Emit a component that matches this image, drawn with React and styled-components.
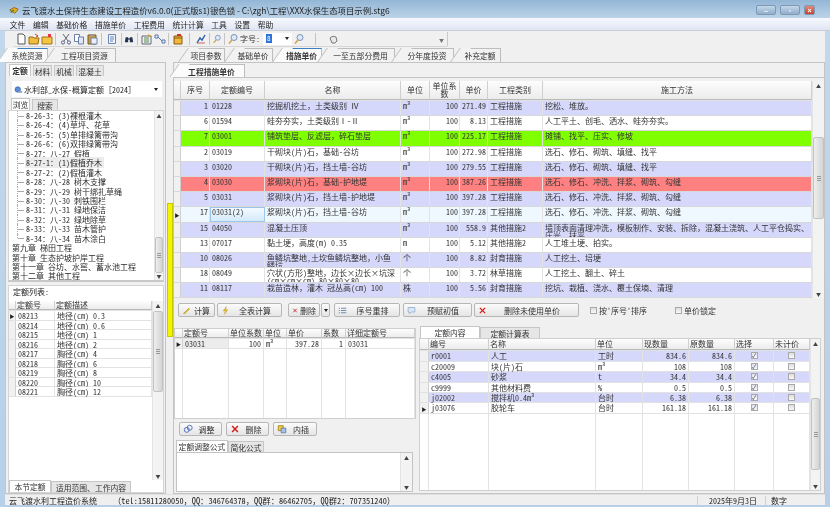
import React from 'react'
import styled, { createGlobalStyle } from 'styled-components'

const GlobalStyle = createGlobalStyle`
  html, body { margin: 0; padding: 0; background: #c3d8ec; }
  * { box-sizing: border-box; }
`

const FONT = `"Noto Sans Mono CJK SC", "Noto Sans CJK SC", sans-serif`

const Window = styled.div`
  width: 830px;
  height: 507px;
  display: flex;
  flex-direction: column;
  overflow: hidden;
  font-family: ${FONT};
  font-size: 8px;
  line-height: 9px;
  color: #333;
  background: linear-gradient(#c3d8ec, #b7d0e8);
  filter: blur(0.3px);
`
const TitleBar = styled.div`
  height: 18px;
  flex: none;
  display: flex;
  align-items: center;
  padding: 2px 15px 0 9px;
  gap: 3px;
  background: linear-gradient(#93b6d6, #bcd3e8);
`
const TitleText = styled.div`
  font-family: "Noto Sans CJK SC", sans-serif;
  font-size: 8.4px;
  color: #222;
  flex: 1;
  white-space: nowrap;
`
const WinButton = styled.div`
  width: ${p => p.$w}px;
  height: 10px;
  margin-left: 1px;
  border: 1px solid #7d99b5;
  border-radius: 2px;
  display: flex;
  align-items: center;
  justify-content: center;
  color: #fff;
  font: bold 7px "Liberation Sans", sans-serif;
  background: ${p => p.$close ? 'linear-gradient(#e08a7a, #c8402c)' : 'linear-gradient(#c5d7e9, #92aecb)'};
`
const MenuBar = styled.div`
  height: 13px;
  flex: none;
  display: flex;
  align-items: center;
  padding: 0 0 0 6px;
  background: linear-gradient(#f7f9fd, #dfe5f3);
  border-bottom: 1px solid #c9ced8;
`
const MenuItem = styled.div`
  padding: 0 3.8px;
  font-size: 7.8px;
  color: #222;
  white-space: nowrap;
`
const ToolBar = styled.div`
  height: 16px;
  flex: none;
  display: flex;
  align-items: center;
  padding: 0 0 0 9px;
  margin: 0 5px;
  background: #f0f0f0;
`
const ToolGroup = styled.div`
  display: flex;
  align-items: center;
  position: relative;
  width: 434px;
  height: 15px;
  border-right: 1px solid #c9c9c9;
  border-bottom: 1px solid #d5d5d5;
  border-radius: 0 0 2px 0;
`
const ToolIcon = styled.div`
  width: ${p => p.$w || 13}px;
  display: flex;
  justify-content: center;
  flex: none;
`
const ToolSep = styled.div`
  width: 1px;
  height: 12px;
  background: #c4c4c4;
  flex: none;
  margin: 0 ${p => p.$m ?? 2}px;
`
const ToolChevron = styled.div`
  position: absolute;
  right: 3px;
  top: 3px;
  font-size: 5px;
  color: #777;
`
const FontLabel = styled.div`
  font-size: 8px;
  white-space: nowrap;
  margin: 0 3px 0 1px;
`
const SizeSelect = styled.div`
  width: 29px;
  height: 12px;
  background: #fff;
  display: flex;
  align-items: center;
  justify-content: space-between;
  padding: 0 3px 0 3px;
  font-size: 5px;
`
const SizeValue = styled.span`
  background: #2f73d9;
  color: #fff;
  padding: 0 1px;
  font-size: 7px;
`
const Body = styled.div`
  flex: 1;
  min-height: 0;
  display: flex;
  margin: 0 5px;
  background: #f0f0f0;
`
const LeftPanel = styled.div`
  width: 161px;
  flex: none;
  display: flex;
  flex-direction: column;
  padding-top: 1px;
`
const Splitter = styled.div`
  width: 7px;
  flex: none;
  padding: 156px 0 0 1px;
`
const SplitterBar = styled.div`
  width: 6px;
  height: 134px;
  background: #f4f400;
  border: 1px solid #c8c800;
`
const RightPanel = styled.div`
  flex: 1;
  min-width: 0;
  display: flex;
  flex-direction: column;
  padding-top: 1px;
`
const TabRow = styled.div`
  display: flex;
  align-items: flex-end;
  height: ${p => p.$h || 14}px;
  flex: none;
  padding-left: ${p => p.$pad || 0}px;
  border-bottom: ${p => p.$line ? '1px solid #c4c4c4' : 'none'};
`
const SlantTab = styled.div`
  position: relative;
  width: ${p => p.$w}px;
  height: ${p => p.$h || 14}px;
  margin-left: ${p => p.$ml || 0}px;
  display: flex;
  align-items: center;
  justify-content: center;
  font-size: 7.8px;
  white-space: nowrap;
  color: #333;
  font-weight: ${p => p.$bold ? 700 : 400};
  background: ${p => p.$active ? '#fbfbfb' : '#f2f2f2'};
  border-top: 1px solid ${p => p.$blue ? '#3e7fc0' : '#bdbdbd'};
  border-right: 1px solid #bdbdbd;
  &::before {
    content: '';
    position: absolute;
    left: -5px;
    top: -1px;
    bottom: 0;
    width: 10px;
    background: inherit;
    border-left: 1px solid #bdbdbd;
    transform: skewX(-35deg);
  }
  & > span { position: relative; }
`
const Pane = styled.div`
  flex: ${p => p.$grow ? 1 : 'none'};
  min-height: 0;
  display: flex;
  flex-direction: column;
  border: 1px solid #c4c4c4;
  background: #f0f0f0;
`
const BoxTabRow = styled.div`
  display: flex;
  align-items: flex-end;
  height: ${p => p.$h || 13}px;
  flex: none;
  padding-left: ${p => p.$pad || 0}px;
  gap: ${p => p.$gap || 0}px;
`
const BoxTab = styled.div`
  width: ${p => p.$w}px;
  height: ${p => p.$active ? 12 : 11}px;
  display: flex;
  align-items: center;
  justify-content: center;
  font-size: 7.8px;
  white-space: nowrap;
  font-weight: ${p => p.$bold ? 700 : 400};
  background: ${p => p.$active ? '#fff' : '#e6e6e6'};
  border: 1px solid #c6c6c6;
  border-bottom: none;
`
const SelectBox = styled.div`
  height: 16px;
  margin: 5px 3px 2px 6px;
  flex: none;
  background: #fff;
  display: flex;
  align-items: center;
  padding: 0 4px 0 2px;
  gap: 1px;
  color: #222;
`
const Caret = styled.span`
  margin-left: ${p => p.$center ? 0 : 'auto'};
  width: 0;
  height: 0;
  border-left: 2.5px solid transparent;
  border-right: 2.5px solid transparent;
  border-top: 3px solid #222;
`
const Tree = styled.div`
  height: 172px;
  flex: none;
  display: flex;
  margin: 0 1px 0 2px;
  background: #fff;
  border: 1px solid #d4d4d4;
  border-bottom: 2px solid #c8c8c8;
`
const TreeRows = styled.div`
  flex: 1;
  min-width: 0;
`
const TreeRow = styled.div`
  height: 9.45px;
  line-height: 9.45px;
  white-space: nowrap;
  position: relative;
  padding-left: ${p => p.$top ? 3 : 17}px;
  color: #2b2b2b;
  &::before {
    content: ${p => p.$top ? 'none' : '""'};
    position: absolute;
    left: 8px;
    top: 0;
    bottom: ${p => p.$last ? '4.7px' : 0};
    width: 6px;
    border-left: 1px dotted #aaa;
    background: linear-gradient(#aaa, #aaa) no-repeat 0 4.7px / 100% 1px;
  }
`
const TreeSel = styled.span`
  background: #ececec;
  padding: 0 2px 0 1px;
  margin-left: -1px;
`
const VScroll = styled.div`
  width: ${p => p.$w || 10}px;
  flex: none;
  display: flex;
  flex-direction: column;
  background: #f3f3f3;
  border-left: 1px solid #e4e4e4;
`
const ScrollEnd = styled.div`
  height: 9px;
  flex: none;
  color: #444;
  font-size: 5px;
  line-height: 9px;
  text-align: center;
`
const ScrollTrack = styled.div`
  flex: 1;
  min-height: 0;
  padding-top: ${p => p.$top || 0}px;
`
const ScrollThumb = styled.div`
  height: ${p => p.$h}px;
  background: linear-gradient(90deg, #eee, #d4d4d4);
  border: 1px solid #c2c2c2;
  border-radius: 2px;
  display: flex;
  align-items: center;
  justify-content: center;
  &::after {
    content: '';
    width: 4px;
    height: 5px;
    background: repeating-linear-gradient(#999 0 1px, transparent 1px 2px);
  }
`
const ListPane = styled.div`
  flex: 1;
  min-height: 0;
  display: flex;
  flex-direction: column;
  margin: 3px 1px 0 2px;
  background: #fff;
  border: 1px solid #d4d4d4;
`
const ListLabel = styled.div`
  height: 15px;
  padding: 1px 0 0 4px;
  flex: none;
  color: #222;
`
const TableWrap = styled.div`
  flex: ${p => p.$fixed ? 'none' : 1};
  min-height: 0;
  display: flex;
  background: #fff;
  border: ${p => p.$border ? '1px solid #cfcfcf' : 'none'};
  margin: ${p => p.$m || 0};
`
const TableBody = styled.div`
  flex: 1;
  min-width: 0;
  display: flex;
  flex-direction: column;
`
const Row = styled.div`
  display: grid;
  flex: ${p => p.$fill ? 1 : 'none'};
  grid-template-columns: ${p => p.$cols};
  height: ${p => p.$fill ? 'auto' : `${p.$h}px`};
  background: ${p => p.$bg || '#fff'};
  border-bottom: ${p => p.$fill ? 'none' : `1px solid ${p.$line || '#e2e2e2'}`};
`
const Cell = styled.div`
  overflow: ${p => p.$clip ? 'hidden' : 'visible'};
  white-space: ${p => p.$clip && !p.$right ? 'normal' : 'nowrap'};
  padding: ${p => p.$clip ? (p.$right ? '1px 1px 0 0' : '1px 2px 0') : '0 2px'};
  text-align: ${p => p.$right ? 'right' : 'left'};
  line-height: ${p => p.$clip ? 8 : 9}px;
  border-right: 1px solid #e3e3e3;
  background: ${p => p.$sel ? 'linear-gradient(#f4fbff, #d2e9fb)' : p.$shade ? '#ececec' : 'transparent'};
  outline: ${p => p.$sel ? '1px solid #9cc6ea' : 'none'};
  outline-offset: -1px;
  word-break: break-all;
`
const Head = styled.div`
  display: flex;
  align-items: center;
  justify-content: ${p => p.$left ? 'flex-start' : 'center'};
  text-align: center;
  line-height: 8px;
  background: linear-gradient(#fdfdfd, #ececec);
  border-right: 1px solid #cfcfcf;
  border-bottom: 1px solid #b9b9b9;
  color: #333;
  padding: ${p => p.$left ? '0 0 0 1px' : '0 2px'};
  white-space: ${p => p.$left ? 'nowrap' : 'normal'};
`
const Indicator = styled.div`
  background: #f1f1f1;
  border-right: 1px solid #d0d0d0;
  display: flex;
  align-items: center;
  justify-content: center;
  color: #222;
  font-size: 5px;
  line-height: 1;
`
const ButtonBar = styled.div`
  height: 22px;
  flex: none;
  display: flex;
  align-items: center;
  padding: 2px 0 0 4px;
  gap: 2px;
`
const ActionButton = styled.div`
  width: ${p => p.$w}px;
  height: 14px;
  flex: none;
  margin-left: ${p => p.$ml || 0}px;
  display: flex;
  align-items: center;
  justify-content: center;
  padding: ${p => p.$bare ? 0 : '0 3px'};
  gap: 2px;
  background: linear-gradient(#fbfbfb, #e5e5e5);
  border: 1px solid #b7b7b7;
  border-radius: 2px;
  white-space: nowrap;
  color: #333;
`
const ButtonText = styled.span`
  flex: 1;
  text-align: center;
`
const Check = styled.div`
  width: 7px;
  height: 7px;
  flex: none;
  background: ${p => p.$on ? 'linear-gradient(#e2e2ee, #fafafa)' : 'linear-gradient(#dedede, #f8f8f8)'};
  border: 1px solid #a9a9a9;
  color: #234;
  font-size: 6px;
  line-height: 5px;
  text-align: center;
  margin: ${p => p.$inline ? 0 : '1px auto 0'};
`
const CheckLabel = styled.div`
  display: flex;
  align-items: center;
  gap: 2px;
  margin-left: ${p => p.$ml}px;
  white-space: nowrap;
`
const Lower = styled.div`
  flex: 1;
  min-height: 0;
  display: flex;
  gap: 3px;
`
const LowerLeft = styled.div`
  width: 242px;
  flex: none;
  display: flex;
  flex-direction: column;
  padding-top: 8px;
`
const LowerRight = styled.div`
  flex: 1;
  min-width: 0;
  display: flex;
  flex-direction: column;
  padding: 6px 3px 2px 0;
`
const SmallButtons = styled.div`
  display: flex;
  height: 19px;
  flex: none;
  gap: 4px;
  padding: 3px 0 0 5px;
`
const Formula = styled.div`
  height: 40px;
  flex: none;
  margin: 0 3px 1px 2px;
  display: flex;
  background: #fff;
  border: 1px solid #c4c4c4;
`
const FormulaText = styled.div`
  flex: 1;
`
const StatusBar = styled.div`
  height: 11px;
  flex: none;
  margin: 0 5px 2px;
  display: flex;
  align-items: center;
  background: #efefef;
  padding-left: 4px;
  color: #222;
  border-top: 1px solid #e0e0e0;
`
const StatusMain = styled.div`
  width: 104px;
  flex: none;
  white-space: nowrap;
`
const StatusInfo = styled.div`
  flex: 1;
  font-size: 8.3px;
  white-space: nowrap;
`
const StatusCell = styled.div`
  width: ${p => p.$w}px;
  flex: none;
  padding-left: ${p => p.$pad}px;
  border-left: 1px solid #d0d0d0;
  white-space: nowrap;
`

const paths = {
  new: <><path d="M3 1h5l2 2v8H3z" fill="#fff" stroke="#555" /></>,
  open: <><path d="M1 4h4l1 1h5l-1 6H1z" fill="#f1bd3c" stroke="#9a6d10" /><path d="M7 1l3 2-2 1" fill="none" stroke="#c33" /></>,
  star: <><path d="M1 4h10v7H1z" fill="#f4c542" stroke="#a5741a" /><path d="M7 1h3v3H7z" fill="#e34" /></>,
  cut: <><path d="M3 1l5 7M9 1L4 8" stroke="#667" fill="none" /><circle cx="3" cy="9.5" r="1.6" fill="none" stroke="#568" /><circle cx="9" cy="9.5" r="1.6" fill="none" stroke="#568" /></>,
  copy: <><path d="M1.5 1.5h5v7h-5z" fill="#fff" stroke="#6a7fa8" /><path d="M5.5 4h5v7h-5z" fill="#dfe8f8" stroke="#6a7fa8" /></>,
  paste: <><path d="M2 2h8v9H2z" fill="#c69a4a" stroke="#7a5a1c" /><path d="M5 5h6v6H5z" fill="#eef" stroke="#68a" /><path d="M4 1h4v2H4z" fill="#999" /></>,
  doc: <><path d="M2.5 1.5h7v9h-7z" fill="#eef3fc" stroke="#6a86b8" /><path d="M4 4h4M4 6h4M4 8h3" stroke="#6a86b8" /></>,
  find: <><path d="M2 4h3v6H1zM7 4h3l1 6H7z" fill="#24324f" /><path d="M5 5h2v2H5z" fill="#24324f" /></>,
  calc: <><path d="M1 3h9v8H1z" fill="#f2f2f2" stroke="#667" /><path d="M3 5h5M3 7h5M3 9h5" stroke="#5a8a5a" /><path d="M7 1l4 2-3 1z" fill="#e0a020" /></>,
  link: <><path d="M1 2h3v3H1zM8 7h3v3H8z" fill="#eef" stroke="#57a" /><path d="M4 4l4 4" stroke="#57a" /></>,
  box: <><path d="M2 3h8v8H2z" fill="#f0b73a" stroke="#8a5d10" /><path d="M2 5h8" stroke="#8a5d10" /><path d="M5 1h4v2H5z" fill="#c33" /></>,
  chart: <><path d="M2 10L5 5l2 2 3-5" stroke="#2a5fb0" fill="none" strokeWidth="1.4" /><path d="M2 10h8" stroke="#c66" /></>,
  zoom: <><circle cx="7" cy="4.5" r="3" fill="#dceaf8" stroke="#7b93b5" /><path d="M5 7l-3 3.5" stroke="#d8a038" strokeWidth="1.4" /></>,
  hand: <><path d="M3 5c2-2 4-2 6-1l1 4-2 2H5z" fill="#e8e8e8" stroke="#777" /></>,
  pencil: <><path d="M2 10l7-7 1 1-6 6z" fill="#f1d23c" stroke="#b79a1c" /></>,
  bolt: <><path d="M7 1L3 6.5h3L4.5 11 9 5H6z" fill="#f1c21c" stroke="#b5901c" strokeWidth=".6" /></>,
  cross: <><path d="M2.5 2.5l7 7M9.5 2.5l-7 7" stroke="#d3201a" strokeWidth="1.8" /></>,
  list: <><path d="M1 3h1.5M1 6h1.5M1 9h1.5M4 3h7M4 6h7M4 9h7" stroke="#4a6a98" /></>,
  note: <><path d="M1.5 2h9v6H6l-3 2V8H1.5z" fill="#d8e8f8" stroke="#8aa8c8" /></>,
  adjust: <><circle cx="4.5" cy="7" r="3" fill="none" stroke="#3a62b8" /><circle cx="8" cy="4.5" r="3" fill="none" stroke="#3a62b8" /></>,
  insert: <><path d="M1.5 2h6v6h-6z" fill="#f3cb45" stroke="#a08020" /><path d="M5 5h5.5v5.5H5z" fill="#a8c4ec" stroke="#5578a8" /></>,
  globe: <><circle cx="5" cy="6" r="3.6" fill="#5b8fd8" stroke="#3a62a8" /><path d="M6 8h5v2.5H6z" fill="#9aa8c0" /></>,
  logo: <><path d="M1 6l5-3 5 2-4 5z" fill="#e8b020" stroke="#8a5d10" /><path d="M2 9l4-3" stroke="#4a7a20" strokeWidth="1.4" /></>,
}

const Icon = ({ name, size = 12 }) => (
  <svg width={size} height={size} viewBox="0 0 12 12">{paths[name]}</svg>
)

const menus = ['文件', '编辑', '基础价格', '措施单价', '工程费用', '统计计算', '工具', '设置', '帮助']

const treeRows = [
  '8-26-3：(3)裸根灌木', '8-26-4：(4)草坪、花草', '8-26-5：(5)单排绿篱带沟', '8-26-6：(6)双排绿篱带沟',
  '8-27：八-27 假植', '8-27-1：(1)假植乔木', '8-27-2：(2)假植灌木', '8-28：八-28 树木支撑',
  '8-29：八-29 树干绑扎草绳', '8-30：八-30 刺铁围栏', '8-31：八-31 绿地保洁', '8-32：八-32 绿地除草',
  '8-33：八-33 苗木管护', '8-34：八-34 苗木涂白',
]
const treeChapters = ['第九章 梯田工程', '第十章 生态护坡护岸工程', '第十一章 谷坊、水窖、蓄水池工程', '第十二章 其他工程']

const normList = [
  ['08213', '地径(cm) 0.3'], ['08214', '地径(cm) 0.6'], ['08215', '地径(cm) 1'], ['08216', '地径(cm) 2'],
  ['08217', '胸径(cm) 4'], ['08218', '胸径(cm) 6'], ['08219', '胸径(cm) 8'], ['08220', '胸径(cm) 10'], ['08221', '胸径(cm) 12'],
]

const LILAC = '#d6d8fb'
const mainCols = '7px 29px 55px 136px 29px 30px 28px 55px 1fr'
const mainHeads = ['', '序号', '定额编号', '名称', '单位', '单位系数', '单价', '工程类别', '施工方法']
const mainRows = [
  [1, '01228', '挖掘机挖土，土类级别 Ⅳ', 'm³', '100', '271.49', '工程措施', '挖松、堆放。', LILAC],
  [6, '01594', '蛙夯夯实，土类级别Ⅰ-Ⅱ', 'm³', '100', '8.13', '工程措施', '人工平土、创毛、洒水、蛙夯夯实。', '#fff'],
  [7, '03001', '铺筑垫层、反滤层，碎石垫层', 'm³', '100', '225.17', '工程措施', '摊铺、找平、压实、修坡', '#80ff00'],
  [2, '03019', '干砌块(片)石，基础-谷坊', 'm³', '100', '272.98', '工程措施', '选石、修石、砌筑、填缝、找平', '#fff'],
  [3, '03020', '干砌块(片)石，挡土墙-谷坊', 'm³', '100', '279.55', '工程措施', '选石、修石、砌筑、填缝、找平', LILAC],
  [4, '03030', '浆砌块(片)石，基础-护地堤', 'm³', '100', '387.26', '工程措施', '选石、修石、冲洗、拌浆、砌筑、勾缝', '#ff8080'],
  [5, '03031', '浆砌块(片)石，挡土墙-护地堤', 'm³', '100', '397.28', '工程措施', '选石、修石、冲洗、拌浆、砌筑、勾缝', LILAC],
  [17, '03031(2)', '浆砌块(片)石，挡土墙-谷坊', 'm³', '100', '397.28', '工程措施', '选石、修石、冲洗、拌浆、砌筑、勾缝', '#eef8fe', true],
  [15, '04050', '混凝土压顶', 'm³', '100', '558.9', '其他措施2', '墙顶表面清理冲洗，模板制作、安装、拆除，混凝土浇筑、人工平仓捣实、压光、抹平', LILAC],
  [13, '07017', '黏土埂，高度(m) 0.35', 'm', '100', '5.12', '其他措施2', '人工堆土埂、拍实。', '#fff'],
  [10, '08026', '鱼鳞坑整地,土坎鱼鳞坑整地，小鱼鳞坑', '个', '100', '8.82', '封育措施', '人工挖土、培埂', LILAC],
  [18, '08049', '穴状(方形)整地，边长×边长×坑深(cm×cm×cm) 80×80×80', '个', '100', '3.72', '林草措施', '人工挖土、翻土、碎土', '#fff'],
  [11, '08117', '栽苗造林，灌木 冠丛高(cm) 100', '株', '100', '5.56', '封育措施', '挖坑、栽植、浇水、覆土保墒、清理', LILAC],
]

const usedCols = '8px 46px 35px 23px 35px 24px 1fr'
const usedHeads = ['', '定额号', '单位系数', '单位', '单价', '系数', '详细定额号']

const contentCols = '9px 60px 107px 47px 46px 46px 39px 1fr'
const contentHeads = ['', '编号', '名称', '单位', '现数量', '原数量', '选择', '未计价']
const contentRows = [
  ['r0001', '人工', '工时', '834.6', '834.6', LILAC],
  ['c20009', '块(片)石', 'm³', '108', '108', '#fff'],
  ['c4005', '砂浆', 't', '34.4', '34.4', LILAC],
  ['c9999', '其他材料费', '%', '0.5', '0.5', '#fff'],
  ['j02002', '搅拌机0.4m³', '台时', '6.38', '6.38', LILAC],
  ['j03076', '胶轮车', '台时', '161.18', '161.18', '#fff', true],
]

// icon name, slot width; the separators carry their own margin
const toolSeq = [
  ['new', 13], ['open', 13], ['star', 13], ['sep', 2], ['cut', 15], ['copy', 12], ['paste', 14], ['sep', 2], ['doc', 15], ['sep', 2],
  ['find', 10], ['sep', 3], ['calc', 12], ['link', 13], ['sep', 2], ['box', 14], ['sep', 4], ['chart', 13], ['sep', 2], ['zoom', 10], ['sep', 2],
]

const App = () => (
  <Window>
    <GlobalStyle />
    <TitleBar>
      <Icon name="logo" size={10} />
      <TitleText>云飞渡水土保持生态建设工程造价v6.0.0(正式版s1)银色锁 - C:\zgh\工程\XXX水保生态项目示例.stg6</TitleText>
      <WinButton $w={20}>–</WinButton>
      <WinButton $w={20}>▫</WinButton>
      <WinButton $w={11} $close>×</WinButton>
    </TitleBar>
    <MenuBar>
      {menus.map(m => <MenuItem key={m}>{m}</MenuItem>)}
    </MenuBar>
    <ToolBar>
      <ToolGroup>
        {toolSeq.map((t, i) => t[0] === 'sep'
          ? <ToolSep key={i} $m={t[1]} />
          : <ToolIcon key={i} $w={t[1]}><Icon name={t[0]} /></ToolIcon>)}
        <ToolIcon $w={12}><Icon name="zoom" /></ToolIcon>
        <FontLabel>字号:</FontLabel>
        <SizeSelect><SizeValue>8</SizeValue><Caret /></SizeSelect>
        <ToolIcon $w={13}><Icon name="zoom" /></ToolIcon>
        <ToolSep $m={10} />
        <ToolIcon $w={13}><Icon name="hand" /></ToolIcon>
        <ToolChevron>▼</ToolChevron>
      </ToolGroup>
    </ToolBar>
    <Body>
      <LeftPanel>
        <TabRow $pad={1}>
          <SlantTab $w={41} $ml={1} $active $blue><span>系统资源</span></SlantTab>
          <SlantTab $w={62} $ml={6}><span>工程项目资源</span></SlantTab>
        </TabRow>
        <Pane $grow>
          <BoxTabRow $h={13} $pad={3} $gap={2}>
            <BoxTab $w={22} $active $bold>定额</BoxTab>
            <BoxTab $w={19}>材料</BoxTab>
            <BoxTab $w={20}>机械</BoxTab>
            <BoxTab $w={28}>混凝土</BoxTab>
          </BoxTabRow>
          <SelectBox>
            <Icon name="globe" size={9} />
            水利部_水保-概算定额［2024］
            <Caret />
          </SelectBox>
          <BoxTabRow $h={11} $pad={5} $gap={2}>
            <BoxTab $w={19} $active>浏览</BoxTab>
            <BoxTab $w={26}>搜索</BoxTab>
          </BoxTabRow>
          <Tree>
            <TreeRows>
              {treeRows.map((t, i) => (
                <TreeRow key={t} $last={i === treeRows.length - 1}>
                  {i === 5 ? <TreeSel>{t}</TreeSel> : t}
                </TreeRow>
              ))}
              {treeChapters.map(t => <TreeRow key={t} $top>{t}</TreeRow>)}
            </TreeRows>
            <VScroll $w={9}>
              <ScrollEnd>▲</ScrollEnd>
              <ScrollTrack $top={117}><ScrollThumb $h={36} /></ScrollTrack>
              <ScrollEnd>▼</ScrollEnd>
            </VScroll>
          </Tree>
          <ListPane>
            <ListLabel>定额列表:</ListLabel>
            <TableWrap>
              <TableBody>
                <Row $cols="7px 39px 1fr" $h={10}>
                  <Head />
                  <Head $left>定额号</Head>
                  <Head $left>定额描述</Head>
                </Row>
                {normList.map((r, i) => (
                  <Row key={r[0]} $cols="7px 39px 1fr" $h={9.5}>
                    <Indicator>{i === 0 ? '▶' : ''}</Indicator>
                    <Cell>{r[0]}</Cell>
                    <Cell>{r[1]}</Cell>
                  </Row>
                ))}
              </TableBody>
              <VScroll $w={11}>
                <ScrollEnd>▲</ScrollEnd>
                <ScrollTrack $top={1}><ScrollThumb $h={81} /></ScrollTrack>
                <ScrollEnd>▼</ScrollEnd>
              </VScroll>
            </TableWrap>
            <BoxTabRow $h={12}>
              <BoxTab $w={42} $active>本节定额</BoxTab>
              <BoxTab $w={80}>适用范围、工作内容</BoxTab>
            </BoxTabRow>
          </ListPane>
        </Pane>
      </LeftPanel>
      <Splitter><SplitterBar /></Splitter>
      <RightPanel>
        <TabRow $pad={14}>
          <SlantTab $w={37} $ml={1}><span>项目参数</span></SlantTab>
          <SlantTab $w={39} $ml={9}><span>基础单价</span></SlantTab>
          <SlantTab $w={40} $ml={9} $active $blue $bold><span>措施单价</span></SlantTab>
          <SlantTab $w={68} $ml={5}><span>一至五部分费用</span></SlantTab>
          <SlantTab $w={53} $ml={6}><span>分年度投资</span></SlantTab>
          <SlantTab $w={41} $ml={6}><span>补充定额</span></SlantTab>
        </TabRow>
        <Pane $grow>
          <TabRow $h={15} $pad={5} $line>
            <SlantTab $w={66} $h={13} $active $bold><span>工程措施单价</span></SlantTab>
          </TabRow>
          <TableWrap $fixed $m="3px 0 0">
            <TableBody>
              <Row $cols={mainCols} $h={20}>
                {mainHeads.map((h, i) => <Head key={i}>{h}</Head>)}
              </Row>
              {mainRows.map(r => (
                <Row key={r[0]} $cols={mainCols} $h={15.2} $bg={r[8]} $line="#d8d8d8">
                  <Indicator>{r[9] ? '▶' : ''}</Indicator>
                  <Cell $clip $right>{r[0]}</Cell>
                  <Cell $clip $sel={r[9]}>{r[1]}</Cell>
                  <Cell $clip>{r[2]}</Cell>
                  <Cell $clip>{r[3]}</Cell>
                  <Cell $clip $right>{r[4]}</Cell>
                  <Cell $clip $right>{r[5]}</Cell>
                  <Cell $clip>{r[6]}</Cell>
                  <Cell $clip>{r[7]}</Cell>
                </Row>
              ))}
            </TableBody>
            <VScroll $w={12}>
              <ScrollEnd>▲</ScrollEnd>
              <ScrollTrack $top={47}><ScrollThumb $h={82} /></ScrollTrack>
              <ScrollEnd>▼</ScrollEnd>
            </VScroll>
          </TableWrap>
          <ButtonBar>
            <ActionButton $w={37}><Icon name="pencil" size={9} /><ButtonText>计算</ButtonText></ActionButton>
            <ActionButton $w={65}><Icon name="bolt" size={9} /><ButtonText>全表计算</ButtonText></ActionButton>
            <ActionButton $w={32} $ml={4}><Icon name="cross" size={9} /><ButtonText>删除</ButtonText></ActionButton>
            <ActionButton $w={9} $ml={-1} $bare><Caret $center /></ActionButton>
            <ActionButton $w={66} $ml={2}><Icon name="list" size={9} /><ButtonText>序号重排</ButtonText></ActionButton>
            <ActionButton $w={69} $ml={1}><Icon name="note" size={9} /><ButtonText>预赋初值</ButtonText></ActionButton>
            <ActionButton $w={105}><Icon name="cross" size={9} /><ButtonText>删除未使用单价</ButtonText></ActionButton>
            <CheckLabel $ml={9}><Check $inline />按'序号'排序</CheckLabel>
            <CheckLabel $ml={26}><Check $inline />单价锁定</CheckLabel>
          </ButtonBar>
          <Lower>
            <LowerLeft>
              <TableWrap $border>
                <TableBody>
                  <Row $cols={usedCols} $h={10}>
                    <Head />
                    {usedHeads.slice(1).map(h => <Head key={h} $left>{h}</Head>)}
                  </Row>
                  <Row $cols={usedCols} $h={10}>
                    <Indicator>▶</Indicator>
                    <Cell $shade>03031</Cell>
                    <Cell $right>100</Cell>
                    <Cell>m³</Cell>
                    <Cell $right>397.28</Cell>
                    <Cell $right>1</Cell>
                    <Cell>03031</Cell>
                  </Row>
                  <Row $cols={usedCols} $fill>
                    {usedHeads.map((h, i) => <Cell key={i} />)}
                  </Row>
                </TableBody>
              </TableWrap>
              <SmallButtons>
                <ActionButton $w={43}><Icon name="adjust" size={10} /><ButtonText>调整</ButtonText></ActionButton>
                <ActionButton $w={43}><Icon name="cross" size={10} /><ButtonText>删除</ButtonText></ActionButton>
                <ActionButton $w={44}><Icon name="insert" size={10} /><ButtonText>内插</ButtonText></ActionButton>
              </SmallButtons>
              <BoxTabRow $h={14} $pad={2}>
                <BoxTab $w={52} $active>定额调整公式</BoxTab>
                <BoxTab $w={36}>简化公式</BoxTab>
              </BoxTabRow>
              <Formula>
                <FormulaText />
                <VScroll $w={12}>
                  <ScrollEnd>▲</ScrollEnd>
                  <ScrollTrack />
                  <ScrollEnd>▼</ScrollEnd>
                </VScroll>
              </Formula>
            </LowerLeft>
            <LowerRight>
              <BoxTabRow $h={12} $pad={1}>
                <BoxTab $w={60} $active>定额内容</BoxTab>
                <BoxTab $w={60}>定额计算表</BoxTab>
              </BoxTabRow>
              <TableWrap $border>
                <TableBody>
                  <Row $cols={contentCols} $h={12}>
                    <Head />
                    {contentHeads.slice(1).map(h => <Head key={h} $left>{h}</Head>)}
                  </Row>
                  {contentRows.map(r => (
                    <Row key={r[0]} $cols={contentCols} $h={10.4} $bg={r[5]}>
                      <Indicator>{r[6] ? '▶' : ''}</Indicator>
                      <Cell>{r[0]}</Cell>
                      <Cell>{r[1]}</Cell>
                      <Cell>{r[2]}</Cell>
                      <Cell $right>{r[3]}</Cell>
                      <Cell $right>{r[4]}</Cell>
                      <Cell><Check $on>✓</Check></Cell>
                      <Cell><Check /></Cell>
                    </Row>
                  ))}
                  <Row $cols={contentCols} $fill>
                    {contentHeads.map((h, i) => <Cell key={i} />)}
                  </Row>
                </TableBody>
                <VScroll $w={10}>
                  <ScrollEnd>▲</ScrollEnd>
                  <ScrollTrack $top={50}><ScrollThumb $h={72} /></ScrollTrack>
                  <ScrollEnd>▼</ScrollEnd>
                </VScroll>
              </TableWrap>
            </LowerRight>
          </Lower>
        </Pane>
      </RightPanel>
    </Body>
    <StatusBar>
      <StatusMain>云飞渡水利工程造价系统</StatusMain>
      <StatusInfo>（tel:15811280050，QQ：346764378，QQ群：86462705，QQ群2：707351240）</StatusInfo>
      <StatusCell $w={68} $pad={11}>2025年9月3日</StatusCell>
      <StatusCell $w={30} $pad={5}>数字</StatusCell>
      <StatusCell $w={30} $pad={0} />
    </StatusBar>
  </Window>
)

export default App
